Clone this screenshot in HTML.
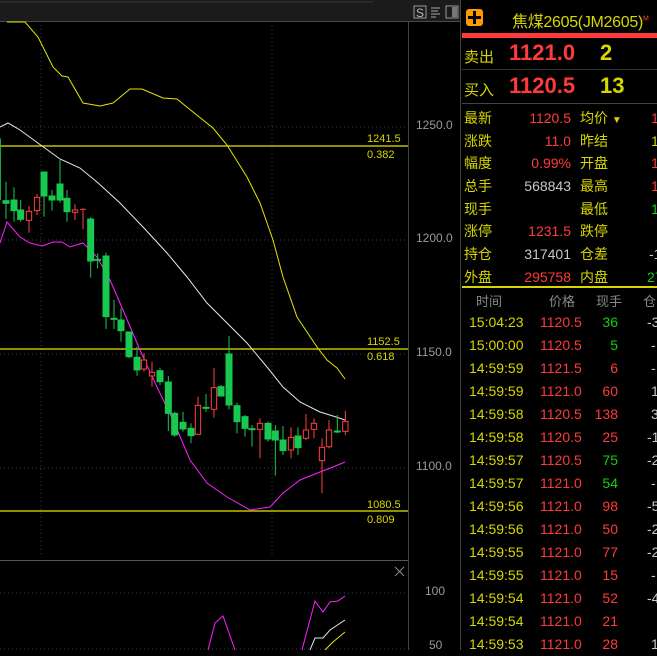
<!DOCTYPE html>
<html><head><meta charset="utf-8"><style>
*{margin:0;padding:0;box-sizing:border-box}
body{width:657px;height:650px;background:#000;overflow:hidden;position:relative;font-family:"Liberation Sans","Noto Sans CJK SC",sans-serif}
.a{position:absolute;white-space:nowrap}
.y{color:#d6d600}.r{color:#ff3a3a}.g{color:#10d010}.w{color:#c8c8c8}
</style></head><body>
<svg class="a" style="left:0;top:0" width="461" height="650">
<rect x="0" y="0" width="461" height="21" fill="#1b1b1b"/>
<line x1="0" y1="2" x2="373" y2="2" stroke="#3a3a3a"/>
<line x1="0" y1="21.5" x2="461" y2="21.5" stroke="#4a4a4a"/>
<rect x="414" y="6" width="12" height="12" fill="none" stroke="#999"/>
<text x="416" y="17" font-size="12" fill="#bbb" font-family="Liberation Sans">S</text>
<g stroke="#aaa"><line x1="431" y1="8" x2="440" y2="8"/><line x1="431" y1="11" x2="438" y2="11"/><line x1="431" y1="14" x2="440" y2="14"/><line x1="431" y1="17" x2="436" y2="17"/></g>
<rect x="446" y="6" width="12" height="12" fill="none" stroke="#999"/><rect x="452" y="7" width="5" height="10" fill="#777"/>
<line x1="408.5" y1="22" x2="408.5" y2="650" stroke="#444"/>
<line x1="460.5" y1="0" x2="460.5" y2="650" stroke="#444"/>
<g stroke="#3a3a5a" stroke-dasharray="1,3">
<line x1="0" y1="127" x2="405" y2="127"/><line x1="0" y1="240" x2="405" y2="240"/><line x1="0" y1="354" x2="405" y2="354"/><line x1="0" y1="468" x2="405" y2="468"/>
<line x1="41" y1="25" x2="41" y2="556"/><line x1="272" y1="25" x2="272" y2="556"/>
<line x1="0" y1="593" x2="405" y2="593"/><line x1="0" y1="649" x2="405" y2="649"/>
</g>
<g stroke="#e6e600" stroke-width="1.2"><line x1="0" y1="146" x2="408" y2="146"/><line x1="0" y1="349" x2="408" y2="349"/><line x1="0" y1="511" x2="408" y2="511"/></g>
<g font-size="11" fill="#d6d600" font-family="Liberation Sans">
<text x="367" y="142">1241.5</text><text x="367" y="158">0.382</text>
<text x="367" y="345">1152.5</text><text x="367" y="360">0.618</text>
<text x="367" y="508">1080.5</text><text x="367" y="523">0.809</text>
</g>
<g font-size="12" fill="#9a9a9a" font-family="Liberation Sans">
<text x="416" y="129">1250.0</text><text x="416" y="242">1200.0</text><text x="416" y="356">1150.0</text><text x="416" y="470">1100.0</text>
<text x="425" y="595">100</text><text x="429" y="649">50</text>
</g>
<polyline fill="none" stroke="#e6e600" stroke-width="1" points="7,22 10,22 25,22 38,37 53,67 62,76 68,77 83,103 100,106 113,103 130,89 142,89 163,98 177,99 193,112 213,128 227,145 247,177 260,203 273,240 283,277 297,317 317,347 327,360 337,368 345,379"/>
<polyline fill="none" stroke="#e8e8e8" stroke-width="1" points="0,127 8,123 20,130 42,146 60,159 80,168 97,182 120,203 143,227 167,253 187,277 207,303 227,323 247,343 267,367 283,387 300,402 320,412 333,416 345,420"/>
<polyline fill="none" stroke="#ff20ff" stroke-width="1" points="0,243 7,222 20,237 30,243 42,246 53,242 62,242 70,247 83,243 97,257 110,280 123,310 140,350 157,387 173,420 190,460 207,483 227,497 250,510 270,507 283,493 300,480 320,472 333,467 345,462"/>
<g transform="translate(0,120) scale(0.33333)" stroke-width="3">
<g stroke="#18c850" fill="#18c850">
<line x1="1" y1="55" x2="1" y2="240"/>
<line x1="18" y1="185" x2="18" y2="297"/><rect x="9" y="242" width="18" height="8"/>
<line x1="42" y1="202" x2="42" y2="305"/><rect x="33" y="240" width="18" height="32"/>
<line x1="62" y1="240" x2="62" y2="305"/><rect x="53" y="270" width="18" height="28"/>
<line x1="132" y1="156" x2="132" y2="290"/><rect x="123" y="156" width="18" height="72"/>
<line x1="156" y1="210" x2="156" y2="272"/><rect x="147" y="228" width="18" height="12"/>
<line x1="180" y1="115" x2="180" y2="248"/><rect x="171" y="192" width="18" height="48"/>
<line x1="201" y1="210" x2="201" y2="305"/><rect x="192" y="235" width="18" height="40"/>
<line x1="272" y1="292" x2="272" y2="473"/><rect x="263" y="297" width="18" height="126"/>
<line x1="293" y1="400" x2="293" y2="445"/><rect x="284" y="418" width="18" height="3"/>
<line x1="318" y1="398" x2="318" y2="627"/><rect x="309" y="408" width="18" height="182"/>
<line x1="342" y1="540" x2="342" y2="627"/><rect x="333" y="595" width="18" height="3"/>
<line x1="363" y1="565" x2="363" y2="665"/><rect x="354" y="600" width="18" height="32"/>
<line x1="387" y1="636" x2="387" y2="715"/><rect x="378" y="636" width="18" height="74"/>
<line x1="411" y1="680" x2="411" y2="767"/><rect x="402" y="712" width="18" height="38"/>
<line x1="480" y1="743" x2="480" y2="795"/><rect x="471" y="752" width="18" height="33"/>
<line x1="505" y1="768" x2="505" y2="933"/><rect x="496" y="786" width="18" height="94"/>
<line x1="524" y1="875" x2="524" y2="950"/><rect x="515" y="880" width="18" height="65"/>
<line x1="549" y1="875" x2="549" y2="935"/><rect x="540" y="907" width="18" height="20"/>
<line x1="573" y1="910" x2="573" y2="970"/><rect x="564" y="925" width="18" height="22"/>
<line x1="618" y1="822" x2="618" y2="875"/><rect x="609" y="862" width="18" height="3"/>
<line x1="663" y1="795" x2="663" y2="828"/><rect x="654" y="800" width="18" height="28"/>
<line x1="687" y1="648" x2="687" y2="868"/><rect x="678" y="702" width="18" height="153"/>
<line x1="711" y1="848" x2="711" y2="940"/><rect x="702" y="857" width="18" height="48"/>
<line x1="735" y1="885" x2="735" y2="950"/><rect x="726" y="890" width="18" height="35"/>
<line x1="756" y1="915" x2="756" y2="980"/><rect x="747" y="926" width="18" height="3"/>
<line x1="804" y1="905" x2="804" y2="965"/><rect x="795" y="910" width="18" height="47"/>
<line x1="826" y1="915" x2="826" y2="1067"/><rect x="817" y="933" width="18" height="27"/>
<line x1="849" y1="918" x2="849" y2="1005"/><rect x="840" y="960" width="18" height="32"/>
<line x1="894" y1="922" x2="894" y2="1005"/><rect x="885" y="948" width="18" height="35"/>
<line x1="1012" y1="885" x2="1012" y2="940"/><rect x="1003" y="933" width="18" height="3"/>
</g>
<g stroke="#ff4040" fill="#000">
<line x1="87" y1="258" x2="87" y2="338"/><rect x="79" y="274" width="16" height="27"/>
<line x1="111" y1="222" x2="111" y2="285"/><rect x="103" y="232" width="16" height="40"/>
<line x1="225" y1="253" x2="225" y2="300"/><rect x="217" y="270" width="16" height="7"/>
<line x1="249" y1="265" x2="249" y2="328"/><line x1="240" y1="268" x2="258" y2="268"/>
<line x1="432" y1="700" x2="432" y2="755"/><rect x="424" y="720" width="16" height="27"/>
<line x1="456" y1="725" x2="456" y2="800"/><rect x="448" y="757" width="16" height="11"/>
<line x1="594" y1="830" x2="594" y2="856"/><rect x="586" y="856" width="16" height="87"/>
<line x1="642" y1="744" x2="642" y2="893"/><rect x="634" y="803" width="16" height="65"/>
<line x1="780" y1="895" x2="780" y2="1015"/><rect x="772" y="910" width="16" height="18"/>
<line x1="873" y1="922" x2="873" y2="1015"/><rect x="865" y="952" width="16" height="38"/>
<line x1="918" y1="882" x2="918" y2="960"/><rect x="910" y="930" width="16" height="25"/>
<line x1="942" y1="895" x2="942" y2="955"/><rect x="934" y="910" width="16" height="18"/>
<line x1="966" y1="955" x2="966" y2="1120"/><rect x="958" y="982" width="16" height="40"/>
<line x1="987" y1="900" x2="987" y2="985"/><rect x="979" y="930" width="16" height="50"/>
<line x1="1036" y1="872" x2="1036" y2="945"/><rect x="1028" y="904" width="16" height="30"/>
</g></g>
<line x1="0" y1="560.5" x2="408" y2="560.5" stroke="#555"/>
<g stroke="#888"><line x1="395" y1="567" x2="404" y2="576"/><line x1="404" y1="567" x2="395" y2="576"/></g>
<polyline fill="none" stroke="#ff20ff" points="208,650 215,623 223,616 235,650"/>
<polyline fill="none" stroke="#ff20ff" points="302,650 315,601 323,612 330,602 338,601 345,596"/>
<polyline fill="none" stroke="#e8e8e8" points="310,650 315,638 323,638 330,630 345,620"/>
<polyline fill="none" stroke="#e6e600" points="325,650 333,642 345,632"/>
</svg>

<div class="a" style="left:466px;top:9px;width:17px;height:17px;background:#ff9900;border-radius:3px"></div>
<div class="a" style="left:468px;top:16px;width:13px;height:3px;background:#000"></div>
<div class="a" style="left:473px;top:11px;width:3px;height:13px;background:#000"></div>
<div class="a y" style="left:512px;top:8px;font-size:16px;letter-spacing:-0.3px">焦煤2605(JM2605)<sup style="font-size:7px;color:#ff4040">M</sup></div>
<div class="a" style="left:462px;top:33px;width:195px;height:5px;background:#ff3a3a"></div>
<div class="a y" style="left:464px;top:46px;font-size:15px">卖出</div>
<div class="a r" style="left:509px;top:40px;font-size:22px;font-weight:bold">1121.0</div>
<div class="a y" style="left:600px;top:40px;font-size:22px;font-weight:bold">2</div>
<div class="a" style="left:462px;top:69px;width:195px;height:1px;background:#333"></div>
<div class="a y" style="left:464px;top:79px;font-size:15px">买入</div>
<div class="a r" style="left:509px;top:73px;font-size:22px;font-weight:bold">1120.5</div>
<div class="a y" style="left:600px;top:73px;font-size:22px;font-weight:bold">13</div>
<div class="a" style="left:462px;top:103px;width:195px;height:1px;background:#444"></div>

<div class="a" style="left:464px;top:107px;width:200px;line-height:22.7px;font-size:14px">
<div style="position:relative;height:22.7px"><span class="a y" style="left:0">最新</span><span class="a r" style="right:93px">1120.5</span><span class="a y" style="left:116px">均价 <span style="font-size:10px">▼</span></span><span class="a r" style="left:187px">1</span></div>
<div style="position:relative;height:22.7px"><span class="a y" style="left:0">涨跌</span><span class="a r" style="right:93px">11.0</span><span class="a y" style="left:116px">昨结</span><span class="a y" style="left:187px">1</span></div>
<div style="position:relative;height:22.7px"><span class="a y" style="left:0">幅度</span><span class="a r" style="right:93px">0.99%</span><span class="a y" style="left:116px">开盘</span><span class="a r" style="left:187px">1</span></div>
<div style="position:relative;height:22.7px"><span class="a y" style="left:0">总手</span><span class="a w" style="right:93px">568843</span><span class="a y" style="left:116px">最高</span><span class="a r" style="left:187px">1</span></div>
<div style="position:relative;height:22.7px"><span class="a y" style="left:0">现手</span><span class="a y" style="left:116px">最低</span><span class="a g" style="left:187px">1</span></div>
<div style="position:relative;height:22.7px"><span class="a y" style="left:0">涨停</span><span class="a r" style="right:93px">1231.5</span><span class="a y" style="left:116px">跌停</span></div>
<div style="position:relative;height:22.7px"><span class="a y" style="left:0">持仓</span><span class="a w" style="right:93px">317401</span><span class="a y" style="left:116px">仓差</span><span class="a w" style="left:185px">-1</span></div>
<div style="position:relative;height:22.7px"><span class="a y" style="left:0">外盘</span><span class="a r" style="right:93px">295758</span><span class="a y" style="left:116px">内盘</span><span class="a g" style="left:183px">27</span></div>
</div>
<div class="a" style="left:462px;top:286px;width:195px;height:2px;background:#d6d600"></div>
<div class="a" style="left:476px;top:291px;font-size:13px;color:#888">时间</div>
<div class="a" style="left:549px;top:291px;font-size:13px;color:#888">价格</div>
<div class="a" style="left:596px;top:291px;font-size:13px;color:#888">现手</div>
<div class="a" style="left:643px;top:291px;font-size:13px;color:#888">仓</div>

<div class="a" style="left:469px;top:311px;width:190px;font-size:14px;line-height:23px">
<div style="position:relative;height:23px"><span class="a y">15:04:23</span><span class="a r" style="left:71px">1120.5</span><span class="a g" style="right:41px">36</span><span class="a w" style="left:178px">-3</span></div>
<div style="position:relative;height:23px"><span class="a y">15:00:00</span><span class="a r" style="left:71px">1120.5</span><span class="a g" style="right:41px">5</span><span class="a w" style="left:182px">-</span></div>
<div style="position:relative;height:23px"><span class="a y">14:59:59</span><span class="a r" style="left:71px">1121.5</span><span class="a r" style="right:41px">6</span><span class="a w" style="left:182px">-</span></div>
<div style="position:relative;height:23px"><span class="a y">14:59:59</span><span class="a r" style="left:71px">1121.0</span><span class="a r" style="right:41px">60</span><span class="a w" style="left:182px">1</span></div>
<div style="position:relative;height:23px"><span class="a y">14:59:58</span><span class="a r" style="left:71px">1120.5</span><span class="a r" style="right:41px">138</span><span class="a w" style="left:182px">3</span></div>
<div style="position:relative;height:23px"><span class="a y">14:59:58</span><span class="a r" style="left:71px">1120.5</span><span class="a r" style="right:41px">25</span><span class="a w" style="left:178px">-1</span></div>
<div style="position:relative;height:23px"><span class="a y">14:59:57</span><span class="a r" style="left:71px">1120.5</span><span class="a g" style="right:41px">75</span><span class="a w" style="left:178px">-2</span></div>
<div style="position:relative;height:23px"><span class="a y">14:59:57</span><span class="a r" style="left:71px">1121.0</span><span class="a g" style="right:41px">54</span><span class="a w" style="left:182px">-</span></div>
<div style="position:relative;height:23px"><span class="a y">14:59:56</span><span class="a r" style="left:71px">1121.0</span><span class="a r" style="right:41px">98</span><span class="a w" style="left:178px">-5</span></div>
<div style="position:relative;height:23px"><span class="a y">14:59:56</span><span class="a r" style="left:71px">1121.0</span><span class="a r" style="right:41px">50</span><span class="a w" style="left:178px">-2</span></div>
<div style="position:relative;height:23px"><span class="a y">14:59:55</span><span class="a r" style="left:71px">1121.0</span><span class="a r" style="right:41px">77</span><span class="a w" style="left:178px">-2</span></div>
<div style="position:relative;height:23px"><span class="a y">14:59:55</span><span class="a r" style="left:71px">1121.0</span><span class="a r" style="right:41px">15</span><span class="a w" style="left:182px">-</span></div>
<div style="position:relative;height:23px"><span class="a y">14:59:54</span><span class="a r" style="left:71px">1121.0</span><span class="a r" style="right:41px">52</span><span class="a w" style="left:178px">-4</span></div>
<div style="position:relative;height:23px"><span class="a y">14:59:54</span><span class="a r" style="left:71px">1121.0</span><span class="a r" style="right:41px">21</span></div>
<div style="position:relative;height:23px"><span class="a y">14:59:53</span><span class="a r" style="left:71px">1121.0</span><span class="a r" style="right:41px">28</span><span class="a w" style="left:182px">1</span></div>
</div>
</body></html>
